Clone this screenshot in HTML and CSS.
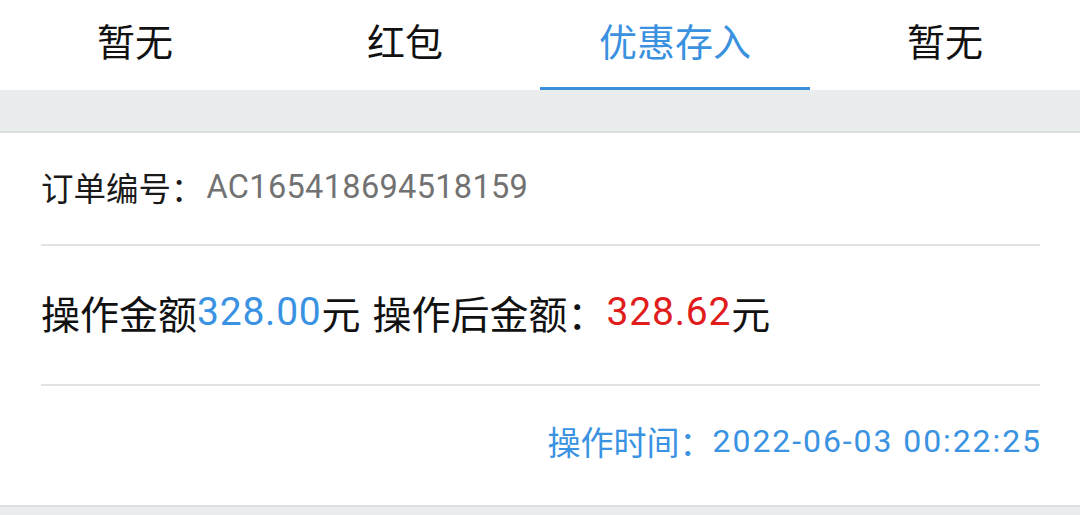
FILE: index.html
```html
<!DOCTYPE html>
<html lang="zh-CN">
<head>
<meta charset="utf-8">
<title>优惠存入</title>
<link rel="stylesheet" href="styles.css">
</head>
<body>
<nav class="tabs">
  <div class="tab">暂无</div>
  <div class="tab">红包</div>
  <div class="tab active">优惠存入</div>
  <div class="tab">暂无</div>
</nav>
<div class="gap"></div>
<section class="card">
  <div class="row row-order">
    <span class="label">订单编号：</span><span class="muted num">AC165418694518159</span>
  </div>
  <div class="row row-amount">
    <span>操作金额</span><span class="blue num">328.00</span><span>元</span><span class="after">操作后金额：</span><span class="red num">328.62</span><span>元</span>
  </div>
  <div class="row row-time">
    <span class="blue label">操作时间：</span><span class="blue num">2022-06-03 00:22:25</span>
  </div>
</section>
</body>
</html>
```

FILE: styles.css
```css
html, body {
  margin: 0;
  padding: 0;
}
body {
  background: #e9edee;
  font-family: "Roboto", "Noto Sans CJK SC", sans-serif;
  color: #111;
  width: 1080px;
  height: 515px;
  overflow: hidden;
}
.tabs {
  display: grid;
  grid-template-columns: repeat(4, 1fr);
  height: 90px;
  background: #fff;
}
.tab {
  display: flex;
  align-items: center;
  justify-content: center;
  font-size: 38px;
  padding-bottom: 12px;
  box-sizing: border-box;
  color: #111;
}
.tab.active {
  color: #3a91e0;
  border-bottom: 3px solid #3a8edd;
  padding-bottom: 9px;
}
.gap {
  height: 41px;
  border-bottom: 2px solid #dcdfe0;
}
.card {
  background: #fff;
  padding: 0 40px 0 41px;
  border-bottom: 2px solid #dcdfe0;
}
.row {
  display: flex;
  align-items: center;
  border-bottom: 2px solid #e2e2e2;
  box-sizing: border-box;
  white-space: nowrap;
}
.row:last-child {
  border-bottom: none;
}
.row-order {
  height: 113px;
  font-size: 32.5px;
  color: #1a1a1a;
  padding-bottom: 4px;
}
.row-order .label {
  margin-right: 3px;
}
.row-order .muted {
  color: #727272;
  letter-spacing: 0.01em;
}
.row-amount {
  height: 140px;
  font-size: 39px;
  color: #111;
  padding-bottom: 7px;
}
.row-amount .num {
  letter-spacing: 0.02em;
}
.row-amount .after {
  margin-left: 12px;
}
.row-time {
  height: 119px;
  font-size: 32px;
  justify-content: flex-end;
  padding-bottom: 10px;
}
.row-time .label {
  font-size: 33px;
}
.row-time .num {
  letter-spacing: 0.06em;
  margin-right: -2px;
}
.blue {
  color: #3a92e2;
}
.red {
  color: #e01c1c;
}
```
